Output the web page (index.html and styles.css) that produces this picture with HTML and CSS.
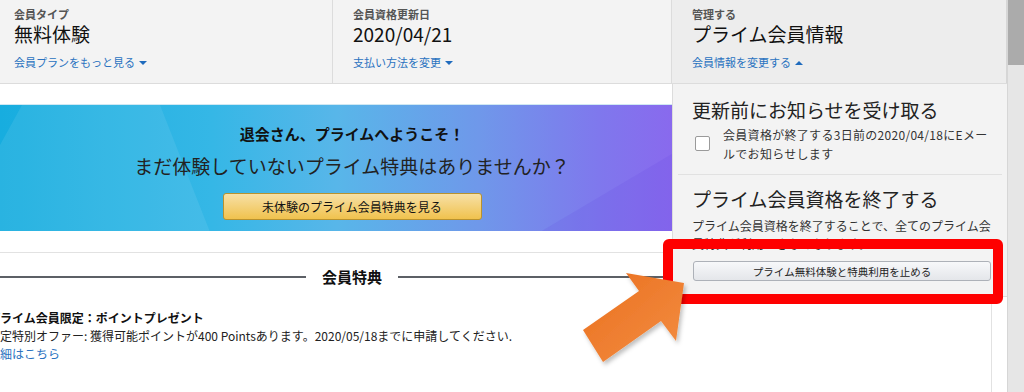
FILE: index.html
```html
<html>
<head>
  <title>プライム会員情報</title>
  <link rel="stylesheet" href="styles.css">
</head>
<body>
  <div class="window">
    <div class="page">
      <div class="plan-bar">
        <div class="plan-col first">
          <div class="label">会員タイプ</div>
          <div class="value">無料体験</div>
          <a class="more">会員プランをもっと見る<i class="caret"></i></a>
        </div>
        <div class="plan-col">
          <div class="label">会員資格更新日</div>
          <div class="value">2020/04/21</div>
          <a class="more">支払い方法を変更<i class="caret"></i></a>
        </div>
        <div class="plan-col open">
          <div class="label">管理する</div>
          <div class="value">プライム会員情報</div>
          <a class="more">会員情報を変更する<i class="caret up"></i></a>
        </div>
      </div>

      <div class="welcome">
        <h2>退会さん、プライムへようこそ！</h2>
        <p>まだ体験していないプライム特典はありませんか？</p>
        <button class="yellow">未体験のプライム会員特典を見る</button>
      </div>

      <div class="benefits">
        <div class="inner">
          <h3 class="rule"><span>会員特典</span></h3>
          <div class="offer">
            <strong>プライム会員限定：ポイントプレゼント</strong>
            <div>限定特別オファー: 獲得可能ポイントが400 Pointsあります。2020/05/18までに申請してください.</div>
            <a>詳細はこちら</a>
          </div>
        </div>
      </div>

      <!-- dropdown of the third column -->
      <div class="popover">
        <div class="pop-section">
          <h4>更新前にお知らせを受け取る</h4>
          <label class="notify">
            <span class="box"></span>
            <span>会員資格が終了する3日前の2020/04/18にEメー<br>ルでお知らせします</span>
          </label>
        </div>
        <div class="pop-section second">
          <h4>プライム会員資格を終了する</h4>
          <p>プライム会員資格を終了することで、全てのプライム会員特典が利用できなくなります。</p>
          <button class="gray">プライム無料体験と特典利用を止める</button>
        </div>
      </div>

      <div class="callout"></div>
      <svg class="arrow" width="140" height="120" viewBox="570 262 130 120">
        <defs>
          <linearGradient id="og" x1="0" y1="0" x2="1" y2="1">
            <stop offset="0" stop-color="#ea6f1f"/>
            <stop offset="1" stop-color="#f38e42"/>
          </linearGradient>
          <filter id="sh" x="-20%" y="-20%" width="150%" height="150%">
            <feDropShadow dx="2" dy="3" stdDeviation="2" flood-color="#000" flood-opacity="0.25"/>
          </filter>
        </defs>
        <polygon points="583,330 639,291 626,273 684,283 676,341 661,321 603,362" fill="url(#og)" filter="url(#sh)"/>
      </svg>
    </div>
    <div class="scrollbar"><div class="thumb"></div></div>
  </div>
</body>
</html>
```

FILE: styles.css
```css
body {
  margin:0;
  padding:0;
  background:#fff;
  font-family:"Noto Sans CJK JP", "Noto Sans", sans-serif;
  color:#111;
}
.window {
  display:flex;
  height:392px;
  overflow:hidden;
}
.page {
  position:relative;
  width:1008px;
  overflow:hidden;
}
.scrollbar {
  width:16px;
  background:#e6e6e6;
  border-left:1px solid #d6d6d6;
}
.thumb {
  height:65px;
  background:#ababab;
}

/* top bar */
.plan-bar {
  display:flex;
  height:83px;
  background:#f3f3f3;
  border-bottom:1px solid #dcdcdc;
}
.plan-col {
  width:318px;
  padding:7px 0 0 20px;
  border-right:1px solid #dcdcdc;
}
.plan-col.first {
  width:318px;
  padding-left:14px;
}
.plan-col.open {
  flex:1;
  background:#ededed;
  border-right:1px solid #d6d6d6;
}
.label {
  font-size:11px;
  line-height:14px;
  font-weight:bold;
  color:#555;
}
.value {
  font-size:19px;
  line-height:26px;
  color:#111;
}
.more {
  display:block;
  margin-top:8px;
  font-size:11px;
  line-height:14px;
  color:#2a72c0;
}
.caret {
  display:inline-block;
  margin-left:4px;
  vertical-align:2px;
  border-left:4px solid transparent;
  border-right:4px solid transparent;
  border-top:4px solid #1f6bbd;
}
.caret.up {
  border-top:none;
  border-bottom:4px solid #1f6bbd;
}

/* banner */
.welcome {
  position:relative;
  width:704px;
  height:127px;
  margin-top:20px;
  border-top:1px solid #cfe8f3;
  box-sizing:border-box;
  padding-top:18px;
  text-align:center;
  background:linear-gradient(90deg, #17addf 0%, #35b7e6 30%, #58b6e9 48%, #6f98ea 68%, #7f78ed 85%, #8d63ee 100%);
  overflow:hidden;
}
.welcome:before {
  content:"";
  position:absolute;
  left:0;
  top:0;
  width:704px;
  height:127px;
  background:rgba(255,255,255,0.08);
  clip-path:polygon(22px 0, 160px 0, 210px 127px, 0 127px, 0 40px);
}
.welcome:after {
  content:"";
  position:absolute;
  left:0;
  top:0;
  width:704px;
  height:127px;
  background:rgba(90,60,220,0.12);
  clip-path:polygon(540px 127px, 704px 30px, 704px 127px);
}
.welcome h2 {
  position:relative;
  z-index:1;
  margin:0;
  font-size:15px;
  line-height:22px;
  font-weight:bold;
  color:#111;
}
.welcome p {
  position:relative;
  z-index:1;
  margin:7px 0 0 0;
  font-size:19px;
  line-height:28px;
  color:#222;
}
button.yellow {
  position:relative;
  z-index:1;
  width:259px;
  height:27px;
  margin-top:13px;
  border:1px solid #b8922f;
  border-radius:3px;
  background:linear-gradient(#f7e0a6, #f0c24e);
  font-family:inherit;
  font-size:12px;
  color:#111;
  padding:0;
}

/* benefits card */
.benefits {
  margin:21px 0 0 -14px;
  width:1005px;
  height:200px;
  border-top:1px solid #e2e2e2;
  border-right:1px solid #e2e2e2;
}
.benefits .inner {
  width:732px;
}
.rule {
  display:flex;
  align-items:center;
  gap:16px;
  margin:0;
  padding-top:13px;
  font-size:15px;
  line-height:22px;
  font-weight:bold;
  color:#111;
}
.rule:before, .rule:after {
  content:"";
  flex:1;
  height:2px;
  background:#5c6066;
}
.offer {
  margin-top:21px;
  padding-left:2px;
  font-size:12px;
  line-height:18px;
  color:#222;
}
.offer strong {
  display:block;
  color:#111;
}
.offer a {
  color:#2a72c0;
}

/* popover */
.popover {
  position:absolute;
  left:672px;
  top:84px;
  width:324px;
  height:212px;
  padding:0 6px 0 5px;
  background:#f3f3f3;
  border-left:1px solid #dcdcdc;
  border-bottom:1px solid #dcdcdc;
}
.pop-section {
  padding:13px 4px 11px 14px;
}
.pop-section.second {
  border-top:1px solid #e1e1e1;
  padding-top:11px;
}
.pop-section h4 {
  margin:0;
  font-size:19px;
  line-height:26px;
  font-weight:normal;
  color:#222;
}
.notify {
  display:flex;
  margin-top:2px;
  font-size:12px;
  line-height:19px;
  letter-spacing:0.3px;
  white-space:nowrap;
  color:#333;
}
.box {
  flex:none;
  width:13px;
  height:13px;
  margin:11px 13px 0 3px;
  background:#fff;
  border:1px solid #9a9a9a;
  border-radius:2px;
}
.pop-section p {
  margin:5px 0 0 0;
  font-size:12px;
  line-height:18px;
  color:#333;
}
button.gray {
  display:block;
  width:298px;
  height:20px;
  margin:8px 0 0 1px;
  padding:0;
  border:1px solid #adb1b8;
  border-radius:3px;
  background:linear-gradient(#f7f8fa, #e4e6ea);
  font-family:inherit;
  font-size:10.5px;
  color:#222;
}

/* annotation overlays */
.callout {
  position:absolute;
  left:663px;
  top:239px;
  width:320px;
  height:45px;
  border:10px solid #fe0000;
  border-radius:6px;
}
.arrow {
  position:absolute;
  left:570px;
  top:262px;
  width:130px;
  height:120px;
}
```
